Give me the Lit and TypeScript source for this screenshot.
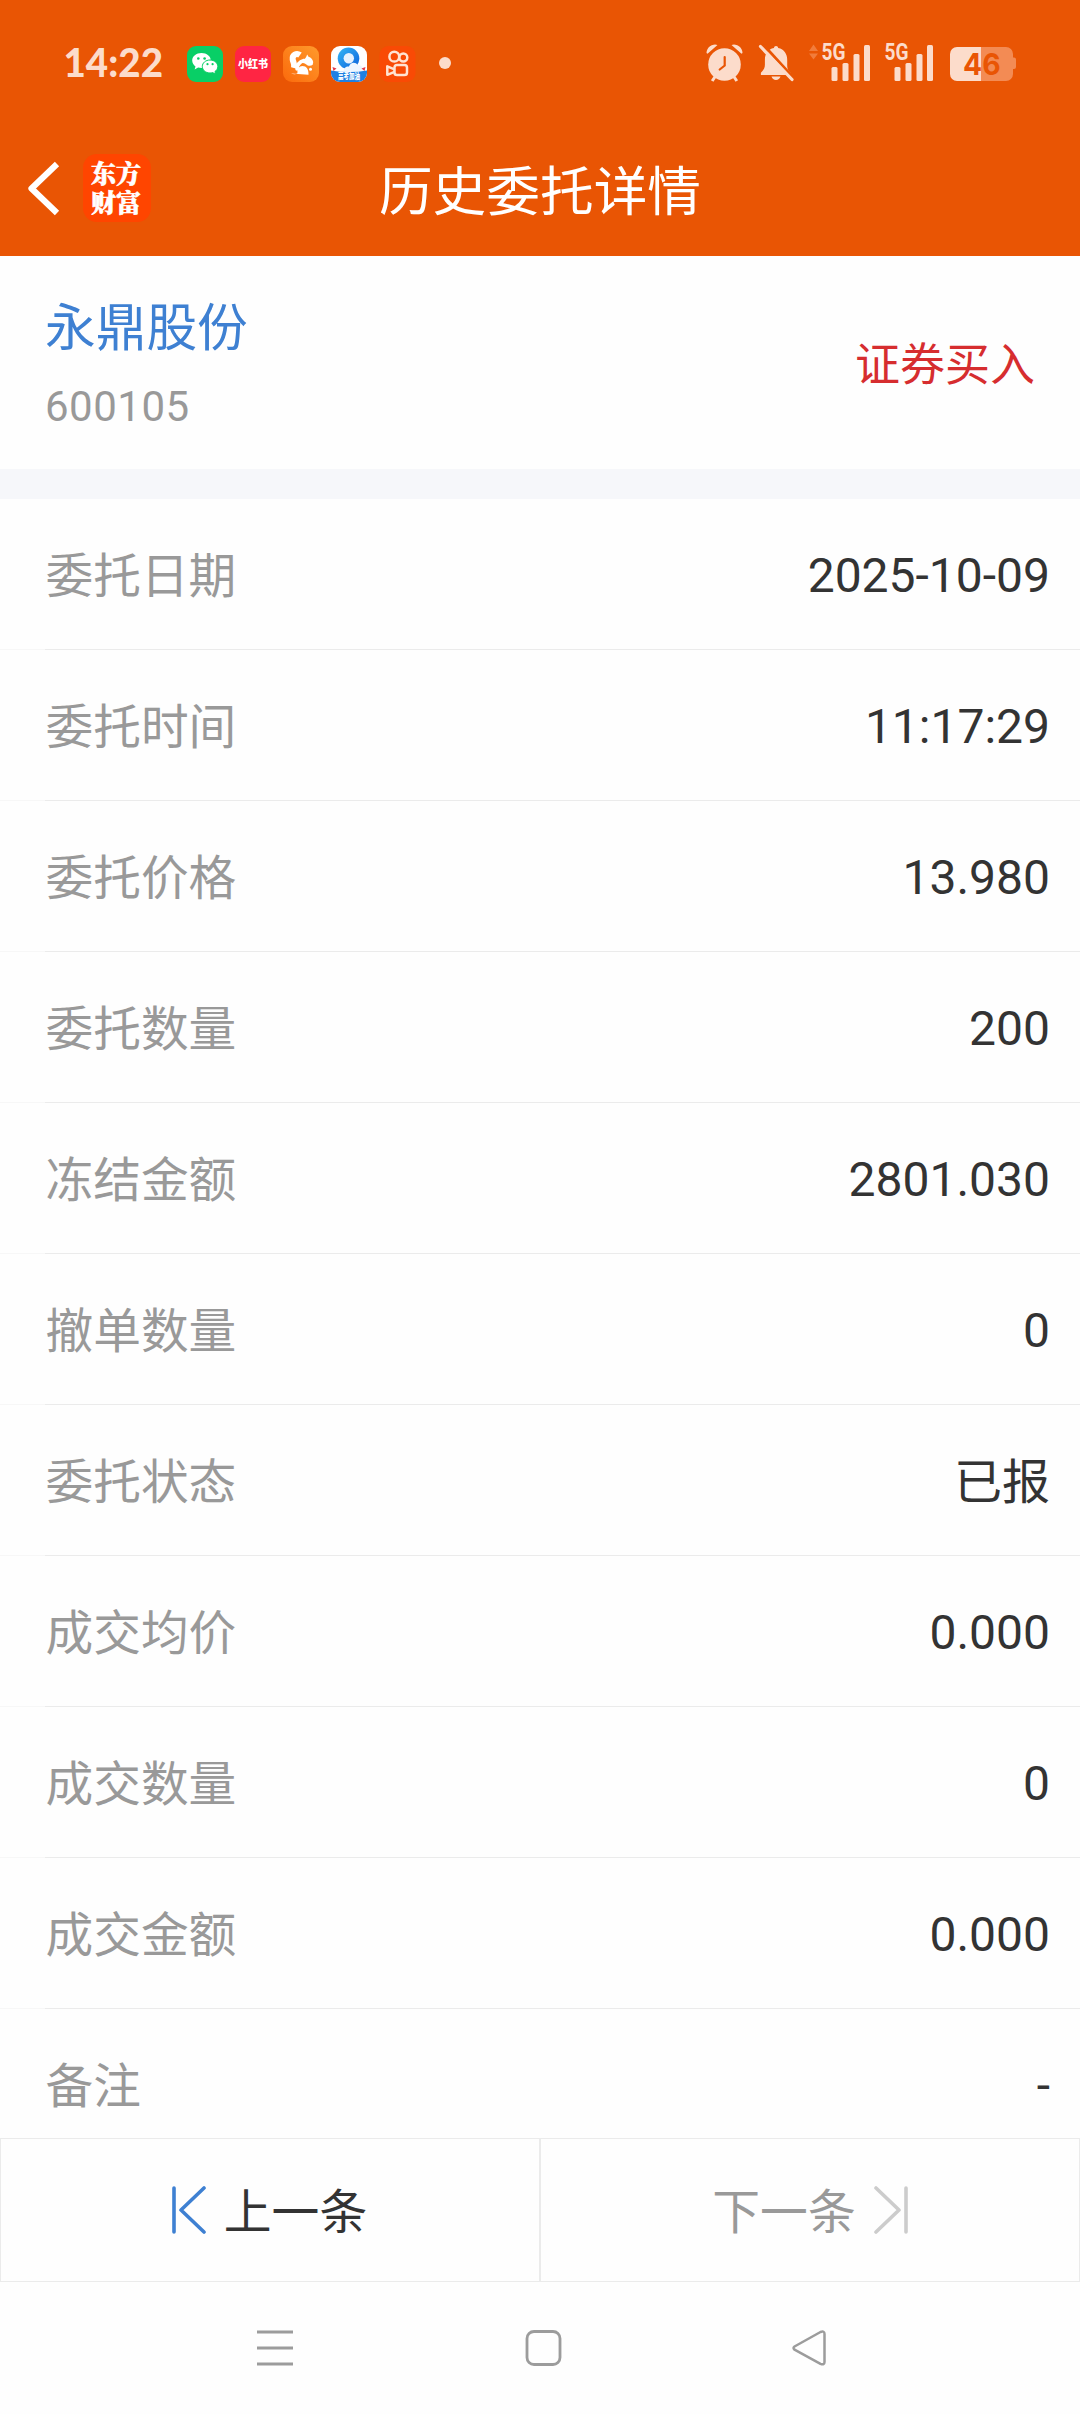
import { LitElement, html, css, svg } from "lit";
import { customElement } from "lit/decorators.js";

const CREAM = "#fcdccb";

const ROWS: [string, string][] = [
  ["委托日期", "2025-10-09"],
  ["委托时间", "11:17:29"],
  ["委托价格", "13.980"],
  ["委托数量", "200"],
  ["冻结金额", "2801.030"],
  ["撤单数量", "0"],
  ["委托状态", "已报"],
  ["成交均价", "0.000"],
  ["成交数量", "0"],
  ["成交金额", "0.000"],
  ["备注", "-"],
];

@customElement("status-bar")
class StatusBar extends LitElement {
  static styles = css`
    :host { display: block; height: 126px; }
    svg { display: block; }
    .time { font-family: Lato, sans-serif; font-weight: 900; font-size: 40px; }
    .net { font-family: Roboto, sans-serif; font-weight: 700; font-size: 23px; }
    .bat { font-family: Inter, sans-serif; font-weight: 700; font-size: 30.500px; }
    .cn { font-family: "Noto Sans CJK SC", sans-serif; font-weight: 900; }
  `;
  bars(x: number) {
    return svg`<g fill=${CREAM}>
      <rect x=${x} y="67" width="6" height="14" rx="1.5"/>
      <rect x=${x + 11} y="63" width="6" height="18" rx="1.5"/>
      <rect x=${x + 22} y="54" width="6" height="27" rx="1.5"/>
      <rect x=${x + 32.5} y="45" width="6" height="36" rx="1.5"/></g>`;
  }
  render() {
    return html`<svg width="1080" height="126" viewBox="0 0 1080 126">
      <defs>
        <linearGradient id="uc" x1="0" y1="1" x2="1" y2="0"><stop offset="0" stop-color="#fb6a0c"/><stop offset="1" stop-color="#ff9a2c"/></linearGradient>
        <linearGradient id="qq" x1="0" y1="0" x2="1" y2="1"><stop offset="0" stop-color="#35b6f5"/><stop offset="1" stop-color="#0b62dc"/></linearGradient>
        <clipPath id="qclip"><rect x="331" y="46" width="36" height="36" rx="9"/></clipPath>
      </defs>
      <text class="time" x="63.500" y="76.500" textLength="99.500" lengthAdjust="spacingAndGlyphs" fill=${CREAM}>14:22</text>

      <rect x="187" y="46" width="36" height="36" rx="9" fill="#08cf66"/>
      <g fill="#fff">
        <path d="M201.500 53c-5.200 0-9.300 3.300-9.300 7.500 0 2.400 1.300 4.500 3.300 5.900l-.9 3 3.500-1.800c1.100.3 2.200.4 3.400.4 5.200 0 9.300-3.300 9.300-7.500s-4.100-7.500-9.300-7.500z"/>
        <path stroke="#08cf66" stroke-width="1" d="M210 60c-4.300 0-7.700 2.900-7.700 6.500s3.400 6.500 7.700 6.500c1 0 1.900-.1 2.700-.4l3 1.700-.8-2.700c1.800-1.200 2.900-3 2.900-5.100 0-3.600-3.500-6.500-7.800-6.500z"/>
      </g>
      <g fill="#08cf66"><circle cx="198.300" cy="58.500" r="1.300"/><circle cx="204.600" cy="58.500" r="1.300"/><circle cx="207.500" cy="64.200" r="1.100"/><circle cx="212.600" cy="64.200" r="1.100"/></g>

      <rect x="235" y="46" width="36" height="36" rx="9" fill="#ff2543"/>
      <text class="cn" x="238" y="68" font-size="11.500" textLength="30" lengthAdjust="spacingAndGlyphs" fill="#fff">小红书</text>

      <rect x="283" y="46" width="36" height="36" rx="9" fill="url(#uc)"/>
      <path fill="none" stroke="#fff" stroke-width="6" stroke-linejoin="round" d="M300 55c-3.500-2.500-8 0-7.300 4.500.5 3 2.300 4.500 1.300 8.500"/>
      <path fill="none" stroke="#fff" stroke-width="3.500" stroke-linecap="round" d="M297 69c0-4.500 2.300-7 7-8.500"/>
      <path fill="#fff" d="M301 62.500c3-2 5-4.500 6.200-8l1.300 2.300c2.700.8 4.200 2.700 4.700 5.200l-.5 2.800c-1.200 1-3.200 1.200-5 .7-1.700-1.600-3.700-2.500-6.700-3z"/>
      <path fill="#fff" d="M291 73.500c3 1 5 .8 6.500-.3-.5-4.300 1.500-7.200 5-7.200 3.800 0 6.300 3 6 8.700z"/>
      <circle cx="310.500" cy="69.300" r="1.500" fill="#fff"/>

      <g clip-path="url(#qclip)">
        <rect x="331" y="46" width="36" height="36" fill="#fff"/>
        <circle cx="348.500" cy="58.300" r="10.800" fill="url(#qq)"/>
        <circle cx="348.800" cy="58.300" r="5.200" fill="#e6f2fe"/>
        <path fill="#edf6ff" d="M343.500 71.500c0-3.500 3-5.500 5.500-5 1-4.500 7-5 8.500-1.500 3.500-.5 6 2.500 6 6.500z"/>
        <path fill="#1e80e2" d="M331 70.500q18 3 36 0V83h-36z"/>
        <path fill="#e33b4a" d="M332.500 67l4 1.500-3 2.500zM365.500 67l-4 1.500 3 2.500z"/>
        <text class="cn" x="338" y="79" font-size="7.500" textLength="22" lengthAdjust="spacingAndGlyphs" fill="#fff">高考加油</text>
      </g>

      <rect x="379.500" y="46" width="36" height="36" rx="9" fill="#f94a05"/>
      <g fill="none" stroke="#ffe3d2" stroke-width="2.500" stroke-linejoin="round">
        <circle cx="394.300" cy="56.700" r="4.900"/><circle cx="403.300" cy="57.500" r="4"/>
        <rect x="394.500" y="65" width="12.500" height="10" rx="2.600"/>
        <path d="M394.500 69.300l-7.200-3v8.500l7.200-3"/>
      </g>
      <circle cx="445" cy="63" r="6" fill=${CREAM}/>

      <g fill=${CREAM}>
        <circle cx="724.500" cy="64.500" r="16.300"/>
        <path d="M706.500 53a8.500 8.500 0 0 1 11-8l-10 8.800zM742.500 53a8.500 8.500 0 0 0-11-8l10 8.800z"/>
      </g>
      <path d="M715.500 76l-3.300 5M733.500 76l3.300 5" stroke=${CREAM} stroke-width="3"/>
      <path d="M724.700 57v8.500l-5 4" fill="none" stroke="#e95504" stroke-width="2.200" stroke-linecap="round"/>

      <path fill=${CREAM} d="M776 46c1.300 0 2 .7 2.200 2 6 1.200 9 6 9 12v6c0 3 1.600 5.500 3.200 6.800v2.200h-29.500v-2.200c2.500-2.300 4-4.800 4-8v-5c0-6 3.200-10.600 9-11.800.2-1.300.9-2 2.100-2zM771.500 76.500h9c-.8 2.300-2.300 3.500-4.500 3.500s-3.700-1.200-4.500-3.500z"/>
      <path d="M763.500 45l31 34" stroke="#e95504" stroke-width="3"/>
      <path d="M760.500 46.500l31.500 33" stroke=${CREAM} stroke-width="3.200" stroke-linecap="round"/>

      <path fill="#f17c3b" d="M809 51l4.500-6.500L818 51zM809 53.500l4.500 6 4.500-6z"/>
      <text class="net" x="821.500" y="60.300" textLength="24" lengthAdjust="spacingAndGlyphs" fill=${CREAM}>5G</text>
      ${this.bars(831.5)}
      <text class="net" x="884.500" y="60.300" textLength="24" lengthAdjust="spacingAndGlyphs" fill=${CREAM}>5G</text>
      ${this.bars(894.5)}

      <path fill="#f38b54" d="M981 47h25a7 7 0 0 1 7 7v3.500h1a2 2 0 0 1 2 2v7.500a2 2 0 0 1-2 2h-1V74a7 7 0 0 1-7 7h-25z"/>
      <path fill=${CREAM} d="M981 47v34h-24a7 7 0 0 1-7-7V54a7 7 0 0 1 7-7z"/>
      <text class="bat" x="963" y="75.300" textLength="37.500" lengthAdjust="spacingAndGlyphs" fill="#e95504">46</text>
    </svg>`;
  }
}

@customElement("title-bar")
class TitleBar extends LitElement {
  static styles = css`
    :host { display: grid; grid-template-columns: 1fr auto 1fr; height: 130px; color: #fff; }
    .left { display: flex; align-items: flex-start; padding: 28px 0 0 25.500px; gap: 23.500px; }
    .back { margin-top: 6px; }
    .logo { box-sizing: border-box; width: 68px; height: 68px; padding: 4px 9px 0 8px; border-radius: 14px; background: #ff4500; font-family: "Noto Serif CJK SC", "Noto Sans CJK SC", sans-serif; font-weight: 900; font-size: 25px; line-height: 29px; white-space: pre-line; -webkit-text-stroke: .6px #fff; }
    .title { font-size: 53.700px; line-height: 78px; padding-top: 28px; }
  `;
  render() {
    return html`
      <div class="left">
        <svg class="back" width="34" height="58" viewBox="0 0 34 58"><path d="M31 4L5.500 28.500L31 53" fill="none" stroke="#fff" stroke-width="6.200" stroke-linejoin="round"/></svg>
        <div class="logo">${"东方\n财富"}</div>
      </div>
      <div class="title">历史委托详情</div>
      <div></div>`;
  }
}

@customElement("order-row")
class OrderRow extends LitElement {
  static properties = { label: {}, value: {} };
  declare label: string;
  declare value: string;
  static styles = css`
    :host { display: block; height: 151px; }
    .row { box-sizing: border-box; height: 150px; padding: 6px 30px 0 45.500px; display: flex; align-items: center; justify-content: space-between; }
    .label { color: #999; font-size: 47.700px; }
    .value { color: #333; }
    .num { padding-bottom: 2px; }
    .line { height: 1px; background: linear-gradient(to right, #f7f7f7 45px, #ebebeb 45px); }
  `;
  render() {
    const numeric = /^[\d.:-]+$/.test(this.value);
    return html`<div class="row"><span class="label">${this.label}</span><span class="value ${numeric ? "num" : ""}">${this.value}</span></div><div class="line"></div>`;
  }
}

@customElement("app-root")
class AppRoot extends LitElement {
  static styles = css`
    :host { display: flex; flex-direction: column; width: 1080px; height: 2414px; overflow: hidden; background: #fefefe; font-family: Roboto, "Noto Sans CJK SC", sans-serif; font-size: 48px; line-height: 72px; }
    .header { flex: none; background: #e95504; }
    .stock { flex: none; box-sizing: border-box; height: 213px; padding: 0 45px; display: flex; justify-content: space-between; }
    .name { color: #3e80d2; font-size: 50.700px; line-height: 74px; padding-top: 36px; }
    .code { color: #999; font-size: 42px; line-height: 50px; letter-spacing: .5px; padding-top: 16px; }
    .side { color: #d62d2f; font-size: 45px; line-height: 66px; padding-top: 77px; }
    .band { flex: none; height: 30px; background: #f6f7fa; }
    .rows { flex: none; height: 1639px; overflow: hidden; }
    .pager { flex: none; display: grid; grid-template-columns: 1fr 1fr; height: 144px; }
    .btn { border: 1px solid #ebebeb; display: flex; justify-content: center; align-items: center; gap: 17px; color: #333; }
    .btn span { padding-top: 5px; font-size: 47.800px; }
    .btn svg { display: block; }
    .prev { padding-right: 2px; }
    .next { color: #999; padding-left: 1px; }
    .nav { flex: 1; display: flex; justify-content: space-between; padding: 46px 250px 0 255px; }
  `;
  render() {
    return html`
      <div class="header"><status-bar></status-bar><title-bar></title-bar></div>
      <div class="stock">
        <div><div class="name">永鼎股份</div><div class="code">600105</div></div>
        <div class="side">证券买入</div>
      </div>
      <div class="band"></div>
      <div class="rows">${ROWS.map(([l, v]) => html`<order-row .label=${l} .value=${v}></order-row>`)}</div>
      <div class="pager">
        <div class="btn prev">
          <svg width="36" height="48" viewBox="0 0 36 48" fill="none" stroke="#3e80d2" stroke-width="3.600" stroke-linecap="round" stroke-linejoin="round"><path d="M3 2v44M33 2L10 24l23 22"/></svg>
          <span>上一条</span>
        </div>
        <div class="btn next">
          <span>下一条</span>
          <svg width="36" height="48" viewBox="0 0 36 48" fill="none" stroke="#ccc" stroke-width="3.600" stroke-linecap="round" stroke-linejoin="round"><path d="M33 2v44M3 2l23 22L3 46"/></svg>
        </div>
      </div>
      <div class="nav">
        <svg width="40" height="40" viewBox="0 0 40 40" stroke="#9c9c9c" stroke-width="3"><path d="M2 4h36M2 20h36M2 36h36"/></svg>
        <svg width="40" height="40" viewBox="0 0 40 40" fill="none" stroke="#9c9c9c" stroke-width="2.800"><rect x="4" y="3.500" width="33" height="33" rx="7"/></svg>
        <svg width="40" height="40" viewBox="0 0 40 40" fill="none" stroke="#9c9c9c" stroke-width="2.500" stroke-linejoin="round"><path d="M4.500 18.500q-2 1.500 0 3.200l26 14.200q4 1.500 4-2V6q0-3.500-4-2z"/></svg>
      </div>`;
  }
}
